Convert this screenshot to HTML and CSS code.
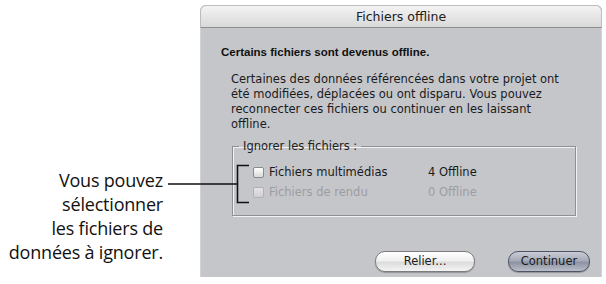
FILE: index.html
```html
<!DOCTYPE html>
<html lang="fr">
<head>
<meta charset="utf-8">
<title>Fichiers offline</title>
<link rel="stylesheet" href="styles.css">
</head>
<body>
<div class="page">
  <div class="callout">
    <div class="callout-line">Vous pouvez</div>
    <div class="callout-line">sélectionner</div>
    <div class="callout-line">les fichiers de</div>
    <div class="callout-line">données à ignorer.</div>
  </div>
  <div class="dialog">
    <div class="titlebar">Fichiers offline</div>
    <div class="content">
      <div class="headline">Certains fichiers sont devenus offline.</div>
      <p class="message">Certaines des données référencées dans votre projet ont<br>été modifiées, déplacées ou ont disparu. Vous pouvez<br>reconnecter ces fichiers ou continuer en les laissant<br>offline.</p>
      <fieldset class="group">
        <legend class="group-label">Ignorer les fichiers :</legend>
        <div class="row">
          <span class="check"></span>
          <span class="name">Fichiers multimédias</span>
          <span class="count">4 Offline</span>
        </div>
        <div class="row disabled">
          <span class="check"></span>
          <span class="name">Fichiers de rendu</span>
          <span class="count">0 Offline</span>
        </div>
      </fieldset>
      <div class="buttons">
        <div class="btn">Relier...</div>
        <div class="btn default">Continuer</div>
      </div>
    </div>
  </div>
  <svg class="leader" width="606" height="284" viewBox="0 0 606 284">
    <path d="M168 184 H237.5 M249 165.5 H237.5 V202.5 H249" fill="none" stroke="#111" stroke-width="1.6"/>
  </svg>
</div>
</body>
</html>
```
FILE: styles.css
```css
html, body {
  margin: 0;
  padding: 0;
  background: #ffffff;
}
body {
  width: 606px;
  height: 284px;
  overflow: hidden;
}
.page {
  position: relative;
  display: flex;
  height: 284px;
}
.callout {
  width: 163px;
  flex: none;
  padding-top: 168px;
  text-align: right;
  font-family: "Open Sans", "DejaVu Sans", sans-serif;
  font-size: 18px;
  line-height: 24px;
  letter-spacing: -0.2px;
  color: #111;
  white-space: nowrap;
}
.dialog {
  flex: none;
  margin-left: 37px;
  margin-top: 5px;
  width: 402px;
  height: 272px;
  background: #c5c6ca;
  border-radius: 6px 6px 0 0;
  box-shadow: inset 1px 0 0 #d2d3d6, inset -1px 0 0 #d2d3d6;
  display: flex;
  flex-direction: column;
  font-family: "DejaVu Sans", sans-serif;
  color: #1a1a1a;
}
.titlebar {
  height: 21px;
  line-height: 22px;
  text-align: center;
  font-size: 12.5px;
  color: #202020;
  background: linear-gradient(#f3f3f3, #d9d9d9);
  border: 1px solid #bdbdbd;
  border-bottom: 1px solid #8e8e8e;
  border-radius: 6px 6px 0 0;
}
.content {
  padding: 17px 0 0 21px;
  font-size: 11.5px;
}
.headline {
  font-family: "Liberation Sans", "DejaVu Sans", sans-serif;
  font-weight: bold;
  font-size: 11.5px;
  line-height: 14px;
  color: #111;
}
.message {
  margin: 13px 0 0 10px;
  line-height: 15px;
  white-space: nowrap;
}
.group {
  margin: 7px 0 0 11px;
  padding: 9px 0 13px 6px;
  width: 344px;
  box-sizing: border-box;
  border: 1px solid #8f9094;
  box-shadow: 1px 1px 0 #f2f2f2, inset 1px 1px 0 #f2f2f2;
}
.group-label {
  padding: 0 4px;
  color: #222;
  line-height: 14px;
}
.row {
  display: flex;
  align-items: center;
  height: 20px;
  padding-left: 14px;
}
.check {
  width: 9px;
  height: 9px;
  border: 1px solid #8a8a8a;
  border-radius: 2px;
  background: linear-gradient(#ffffff, #d8d8d8);
  margin-right: 5px;
}
.name {
  width: 159px;
}
.row.disabled {
  color: #9c9da1;
}
.row.disabled .check {
  border-color: #b0b1b4;
  background: linear-gradient(#e4e4e6, #cfcfd2);
}
.buttons {
  display: flex;
  justify-content: flex-end;
  gap: 33px;
  margin-top: 35px;
  padding-right: 12px;
}
.btn {
  height: 19px;
  line-height: 19px;
  border-radius: 10px;
  text-align: center;
  font-size: 11.5px;
  color: #1a1a1a;
  border: 1px solid #7c7c7c;
  background: linear-gradient(#ffffff 0%, #f0f0f0 45%, #dcdcdc 55%, #f4f4f4 100%);
  box-shadow: 0 1px 1px rgba(0,0,0,0.25);
  width: 98px;
}
.btn.default {
  width: 80px;
  border-color: #4f5463;
  background: linear-gradient(#c9ccd6 0%, #a7abb8 45%, #8e93a3 55%, #b9bdc9 100%);
}
.leader {
  position: absolute;
  left: 0;
  top: 0;
  pointer-events: none;
}
```
